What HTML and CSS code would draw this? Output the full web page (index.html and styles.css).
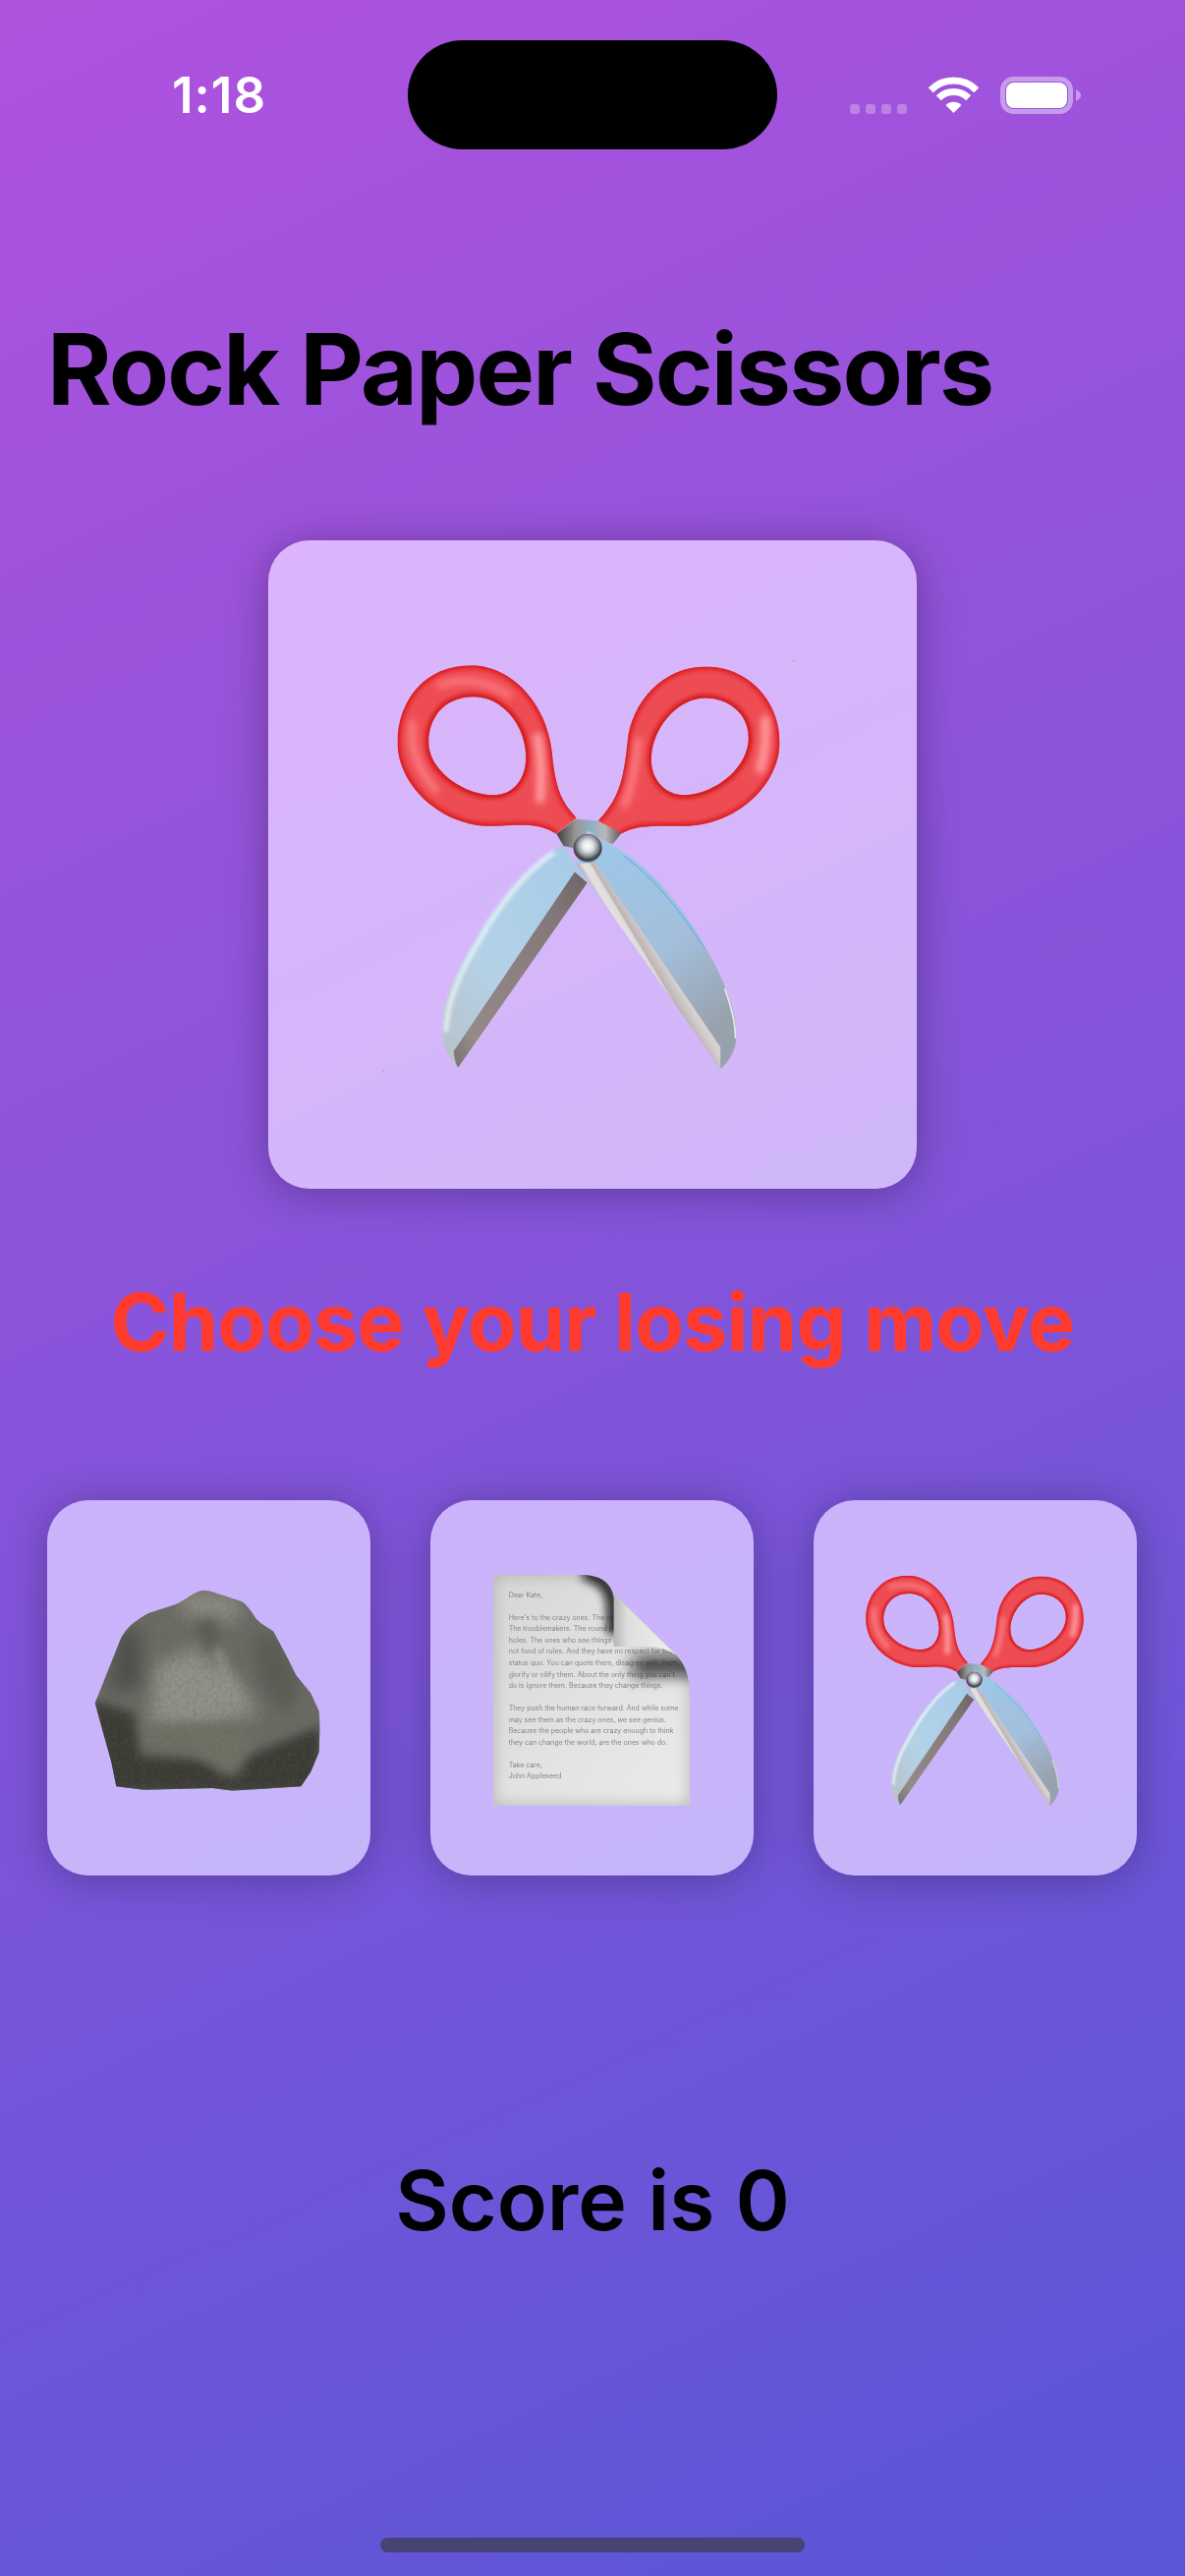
FILE: index.html
```html
<!DOCTYPE html>
<html lang="en">
<head>
<meta charset="utf-8">
<title>Rock Paper Scissors</title>
<link rel="stylesheet" href="styles.css">
</head>
<body>
<main class="page">
  <header class="status">
    <div class="time">1:18</div>
    <div class="island"></div>
    <div class="icons">
      <div class="signal"><span></span><span></span><span></span><span></span></div>
      <svg class="wifi" viewBox="0 0 51 37" width="51" height="37">
        <g fill="none" stroke="#fff" stroke-width="7">
          <path d="M2.2 13.7A33 33 0 0 1 48.8 13.7"/>
          <path d="M10.3 21.8A21.5 21.5 0 0 1 40.7 21.8"/>
        </g>
        <path fill="#fff" d="M25.5 37L17.5 29A11.3 11.3 0 0 1 33.5 29Z"/>
      </svg>
      <svg class="battery" viewBox="0 0 82 38" width="82" height="38">
        <rect x="2.5" y="2.5" width="69" height="33" rx="11" fill="none" stroke="#fff" stroke-opacity=".42" stroke-width="5"/>
        <rect x="6" y="6" width="62" height="26" rx="8" fill="#fff"/>
        <path d="M77 13.5c3 .8 5 3 5 5.500s-2 4.700-5 5.500z" fill="#fff" fill-opacity=".42"/>
      </svg>
    </div>
  </header>

  <h1 class="title">Rock Paper Scissors</h1>

  <section class="hero">
    <svg class="sc-big" viewBox="320 305 900 945" width="396" height="416">
      <defs>
        <linearGradient id="blueL" x1="1" y1="0" x2="0" y2="1">
          <stop offset="0" stop-color="#a6cbe8"/><stop offset=".6" stop-color="#b3d2e8"/><stop offset="1" stop-color="#b9c1c8"/>
        </linearGradient>
        <linearGradient id="blueR" x1="0" y1="0" x2=".5" y2="1">
          <stop offset="0" stop-color="#9cc8ea"/><stop offset=".6" stop-color="#a4bfdc"/><stop offset="1" stop-color="#98a2ae"/>
        </linearGradient>
        <linearGradient id="bevelL" x1="1" y1="0" x2="0" y2="1">
          <stop offset="0" stop-color="#6e6563"/><stop offset=".25" stop-color="#85787a"/><stop offset=".85" stop-color="#968989"/><stop offset="1" stop-color="#7a7273"/>
        </linearGradient>
        <linearGradient id="bevelR" gradientUnits="userSpaceOnUse" x1="885" y1="1015" x2="935" y2="985">
          <stop offset="0" stop-color="#a89e9e"/><stop offset=".25" stop-color="#e6e2e4"/><stop offset=".5" stop-color="#dfdadc"/><stop offset=".56" stop-color="#bdb4b4"/><stop offset="1" stop-color="#d6d0d2"/>
        </linearGradient>
        <linearGradient id="collar" x1="0" y1="0" x2="1" y2="0">
          <stop offset="0" stop-color="#3f3c3e"/><stop offset=".3" stop-color="#9a9799"/><stop offset=".55" stop-color="#8fb2c6"/><stop offset=".75" stop-color="#b9b6b8"/><stop offset="1" stop-color="#5b585a"/>
        </linearGradient>
        <radialGradient id="rivet" cx=".5" cy=".42" r=".55">
          <stop offset="0" stop-color="#ffffff"/><stop offset=".35" stop-color="#dfe4e8"/><stop offset=".65" stop-color="#8f959b"/><stop offset=".9" stop-color="#3a3a3e"/><stop offset="1" stop-color="#6a6a6e"/>
        </radialGradient>
        <filter id="soft" filterUnits="userSpaceOnUse" x="300" y="290" width="950" height="980"><feGaussianBlur stdDeviation="9"/></filter>
        <filter id="softer" filterUnits="userSpaceOnUse" x="300" y="290" width="950" height="980"><feGaussianBlur stdDeviation="5"/></filter>
        <clipPath id="hL"><path clip-rule="evenodd" d="M742 665C712 630 695 610 686 520C676 400 590 312 498 312C390 312 328 395 328 490C328 590 430 685 545 684C600 684 650 672 695 702ZM505 385C430 385 400 440 400 490C400 555 480 612 550 612C600 612 625 570 625 525C625 450 570 385 505 385Z"/></clipPath>
        <clipPath id="hR"><path clip-rule="evenodd" d="M792 672C835 625 850 590 860 490C868 400 940 315 1040 315C1140 315 1212 395 1212 490C1212 590 1110 684 990 684C930 684 880 680 845 702ZM1040 388C975 388 915 460 915 530C915 580 950 612 990 612C1060 612 1140 550 1140 480C1140 425 1095 388 1040 388Z"/></clipPath>
        <g id="scissors">
          <g clip-path="url(#hL)">
            <rect x="320" y="305" width="440" height="400" fill="#ee4c53"/>
            <path filter="url(#softer)" fill="none" stroke="#d81a20" stroke-width="14" d="M742 665C712 630 695 610 686 520C676 400 590 312 498 312C390 312 328 395 328 490C328 590 430 685 545 684C600 684 650 672 695 702"/>
            <path filter="url(#softer)" fill="none" stroke="#cf1218" stroke-width="15" d="M505 385C430 385 400 440 400 490C400 555 480 612 550 612C600 612 625 570 625 525C625 450 570 385 505 385Z"/>
            <path filter="url(#soft)" fill="none" stroke="#ff9ea2" stroke-width="20" d="M658 630C662 570 662 520 650 470"/>
            <path filter="url(#soft)" fill="none" stroke="#fb7f84" stroke-width="16" d="M364 440C354 490 370 550 420 605"/>
            <path filter="url(#soft)" fill="none" stroke="#fb7f84" stroke-width="14" d="M420 360C470 340 540 345 590 385"/>
          </g>
          <g clip-path="url(#hR)">
            <rect x="780" y="305" width="440" height="400" fill="#ee4c53"/>
            <path filter="url(#softer)" fill="none" stroke="#d81a20" stroke-width="14" d="M792 672C835 625 850 590 860 490C868 400 940 315 1040 315C1140 315 1212 395 1212 490C1212 590 1110 684 990 684C930 684 880 680 845 702"/>
            <path filter="url(#softer)" fill="none" stroke="#cf1218" stroke-width="15" d="M1040 388C975 388 915 460 915 530C915 580 950 612 990 612C1060 612 1140 550 1140 480C1140 425 1095 388 1040 388Z"/>
            <path filter="url(#soft)" fill="none" stroke="#ff9ea2" stroke-width="20" d="M1178 430C1182 470 1180 510 1165 560"/>
            <path filter="url(#soft)" fill="none" stroke="#fb7f84" stroke-width="16" d="M885 480C880 540 870 600 850 640"/>
          </g>
          <path fill="url(#blueL)" d="M712 728C640 765 580 830 520 925C470 1005 432 1080 432 1150C432 1190 445 1225 468 1243L767 815Z"/>
          <path filter="url(#softer)" fill="none" stroke="#f6fafc" stroke-width="8" d="M690 745C630 785 575 850 525 935C480 1010 442 1080 440 1160"/>
          <path fill="url(#bevelL)" d="M738 790L767 815L468 1243C463 1235 460 1225 458 1205Z"/>
          <path fill="url(#blueR)" d="M800 715C880 750 960 830 1020 930C1075 1020 1112 1100 1112 1170C1112 1200 1095 1230 1075 1245L740 770Z"/>
          <path fill="none" stroke="#6fb1ee" stroke-width="3" d="M850 752C930 810 990 890 1040 970"/>
          <path fill="none" stroke="#e8e8e6" stroke-width="4" d="M1085 1060C1100 1100 1110 1140 1110 1175"/>
          <path fill="url(#bevelR)" d="M742 772L785 768L1075 1195L1075 1245Z"/>
          <path fill="url(#collar)" d="M696 702L740 668L790 672L846 700L826 726L800 715L770 695L735 735L712 730Z"/>
          <circle cx="768" cy="735" r="33" fill="url(#rivet)"/>
        </g>
      </defs>
      <use href="#scissors"/>
      <circle cx="1245" cy="302" r="2" fill="#f1868f"/>
      <circle cx="296" cy="1251" r="2" fill="#f1868f"/>
    </svg>
  </section>

  <h2 class="prompt">Choose your losing move</h2>

  <section class="choices">
    <button class="choice" type="button" aria-label="Rock">
      <svg class="rock" viewBox="195 320 700 625" width="233" height="208">
        <defs>
          <clipPath id="rockClip"><path d="M200 670L228 600L280 470C295 445 310 430 325 420C345 405 360 395 380 390L440 370C465 362 480 348 495 340C510 330 525 325 535 325C555 327 570 335 590 340L650 360C670 375 680 395 695 415C710 430 730 440 745 450L790 535L815 585L860 640L885 695L888 740L885 820L860 880L830 925L620 938L560 930L350 935L265 925L250 850L225 760Z"/></clipPath>
          <filter id="b30" x="-40%" y="-40%" width="180%" height="180%"><feGaussianBlur stdDeviation="26"/></filter>
          <filter id="b12" x="-40%" y="-40%" width="180%" height="180%"><feGaussianBlur stdDeviation="16"/></filter>
          <filter id="edge" x="-5%" y="-5%" width="110%" height="110%"><feGaussianBlur stdDeviation="1.800"/></filter>
          <filter id="grain" x="0" y="0" width="100%" height="100%">
            <feTurbulence type="fractalNoise" baseFrequency=".09" numOctaves="4" seed="4"/>
            <feColorMatrix values="0 0 0 0 .12  0 0 0 0 .12  0 0 0 0 .1  1.100 0 0 0 -.42"/>
          </filter>
        </defs>
        <g filter="url(#edge)">
          <g clip-path="url(#rockClip)">
            <rect x="195" y="320" width="700" height="625" fill="#6c6c66"/>
            <path filter="url(#b30)" fill="#92928a" d="M380 560L500 500L640 600L700 700L560 740L370 740Z"/>
            <path filter="url(#b30)" fill="#8f8f85" d="M460 325L640 345L640 420L470 400Z"/>
            <path filter="url(#b12)" fill="#5c5c55" d="M500 430L560 410L600 510L630 620L570 540Z"/>
            <path filter="url(#b12)" fill="#96968a" d="M580 480L640 640L600 650L560 520Z"/>
            <path filter="url(#b30)" fill="#5a5b55" d="M680 450L770 470L830 620L780 720L700 600Z"/>
            <path filter="url(#b30)" fill="#4d4e48" d="M270 460L340 430L340 620L240 640Z"/>
            <path filter="url(#b12)" fill="#3a3b36" d="M190 660L320 700L340 830L620 850L720 810L890 740L890 945L190 945Z"/>
            <path filter="url(#b12)" fill="#6f6f65" d="M350 740L620 730L680 790L640 890L590 890L500 815L355 800Z"/>
            <rect x="195" y="320" width="700" height="625" filter="url(#grain)" opacity=".55"/>
          </g>
        </g>
      </svg>
    </button>

    <button class="choice" type="button" aria-label="Paper">
      <svg class="paper" viewBox="215 278 600 705" width="200" height="235">
        <defs>
          <clipPath id="sheetClip"><path d="M215 278H485C540 278 575 300 583 345L770 520C800 545 815 590 815 640V983H215Z"/></clipPath>
          <filter id="p16" filterUnits="userSpaceOnUse" x="200" y="200" width="720" height="850"><feGaussianBlur stdDeviation="14"/></filter>
          <filter id="p24" filterUnits="userSpaceOnUse" x="150" y="200" width="780" height="850"><feGaussianBlur stdDeviation="24"/></filter>
          <filter id="textBlur" x="-5%" y="-5%" width="110%" height="110%"><feGaussianBlur stdDeviation="2"/></filter>
          <linearGradient id="flap" x1="0" y1="0" x2="1" y2="0">
            <stop offset="0" stop-color="#b5b5b5"/><stop offset=".22" stop-color="#dedede"/><stop offset="1" stop-color="#f0f0f0"/>
          </linearGradient>
          <linearGradient id="sheetFill" x1="0" y1="0" x2="1" y2="1">
            <stop offset="0" stop-color="#d6d6d6"/><stop offset=".5" stop-color="#e2e2e2"/><stop offset="1" stop-color="#ebebeb"/>
          </linearGradient>
        </defs>
        <g clip-path="url(#sheetClip)">
          <rect x="215" y="278" width="600" height="705" fill="url(#sheetFill)"/>
          <rect x="200" y="263" width="630" height="735" fill="none" stroke="#aaa" stroke-width="30" filter="url(#p24)"/>
          <g class="letter" filter="url(#textBlur)">
            <text x="262" y="347">Dear Kate,</text>
            <text x="262" y="416">Here's to the crazy ones. The misfits. The rebels.</text>
            <text x="262" y="450">The troublemakers. The round pegs in the square</text>
            <text x="262" y="485">holes. The ones who see things differently. They're</text>
            <text x="262" y="519">not fond of rules. And they have no respect for the</text>
            <text x="262" y="554">status quo. You can quote them, disagree with them,</text>
            <text x="262" y="589">glorify or vilify them. About the only thing you can't</text>
            <text x="262" y="623">do is ignore them. Because they change things.</text>
            <text x="262" y="692">They push the human race forward. And while some</text>
            <text x="262" y="727">may see them as the crazy ones, we see genius.</text>
            <text x="262" y="762">Because the people who are crazy enough to think</text>
            <text x="262" y="796">they can change the world, are the ones who do.</text>
            <text x="262" y="865">Take care,</text>
            <text x="262" y="899">John Appleseed</text>
          </g>
          <path filter="url(#p16)" fill="none" stroke="#111" stroke-width="40" stroke-opacity=".9" d="M490 272C550 285 580 320 582 380V460"/>
          <path filter="url(#p24)" fill="none" stroke="#111" stroke-width="56" stroke-opacity=".85" d="M640 560C700 555 770 550 850 560"/>
        </g>
        <path fill="url(#flap)" d="M583 335L772 522C745 505 720 497 690 497H583Z"/>
      </svg>
    </button>

    <button class="choice" type="button" aria-label="Scissors">
      <svg class="sc-small" viewBox="320 305 900 945" width="226" height="237"><use href="#scissors"/></svg>
    </button>
  </section>

  <p class="score">Score is 0</p>
  <div class="home-bar"></div>
</main>
</body>
</html>
```

FILE: styles.css
```css
* { box-sizing: border-box; }
html, body { margin: 0; padding: 0; }
body { width: 1206px; height: 2622px; overflow: hidden; }
.page {
  width: 1206px; height: 2622px;
  display: flex; flex-direction: column;
  background: linear-gradient(155.3deg, #af52de, #5856d6);
  font-family: Inter, "Liberation Sans", sans-serif;
  color: #000;
}
.status {
  display: grid;
  grid-template-columns: 415px 376px 1fr;
  align-items: center;
  height: 111px;
  margin-top: 41px;
  color: #fff;
}
.time { padding-left: 175px; font-size: 51px; font-weight: 600; line-height: 1; letter-spacing: 1px; }
.island { height: 111px; background: #000; border-radius: 56px; }
.icons { display: flex; align-items: center; gap: 22px; padding-left: 74px; height: 38px; }
.signal { display: flex; gap: 6px; align-self: flex-end; }
.signal span { width: 10px; height: 10px; border-radius: 3px; background: rgba(255,255,255,.28); }
.wifi, .battery { display: block; flex: none; }

.title { margin: 164px 0 0 48px; font-size: 100px; line-height: 120px; font-weight: 700; letter-spacing: -1.8px; }
.hero {
  margin: 114px auto 0;
  width: 660px; height: 660px;
  display: flex; align-items: center; justify-content: center;
  padding: 4px 8px 0 0;
  border-radius: 42px;
  background: linear-gradient(155deg, #dcb5fc, #cfb7f8);
  box-shadow: 0 4px 45px rgba(0,0,0,.3);
}
.sc-big { display: block; flex: none; overflow: visible; }
.prompt { margin: 86px 0 0; text-align: center; color: #ff3b30; font-size: 81px; line-height: 100px; font-weight: 700; letter-spacing: -.8px; }
.choices { margin-top: 131px; padding: 0 48px; display: grid; grid-template-columns: repeat(3, 329px); gap: 61px; }
.choice {
  appearance: none; border: 0; margin: 0;
  height: 382px;
  display: flex; align-items: center; justify-content: center;
  padding: 5px 2px 0 0;
  border-radius: 42px;
  background: linear-gradient(160deg, #ccb3fc, #c6b5f9);
  box-shadow: 0 4px 45px rgba(0,0,0,.28);
}
.rock, .paper, .sc-small { display: block; flex: none; }
.letter { font-family: Inter, "Liberation Sans", sans-serif; font-size: 21px; fill: #858585; }
.score { margin: 281px 0 0; text-align: center; font-size: 84px; line-height: 100px; font-weight: 600; }
.home-bar { margin: 293px auto 0; width: 432px; height: 15px; border-radius: 8px; background: rgba(55,55,52,.6); }
```
